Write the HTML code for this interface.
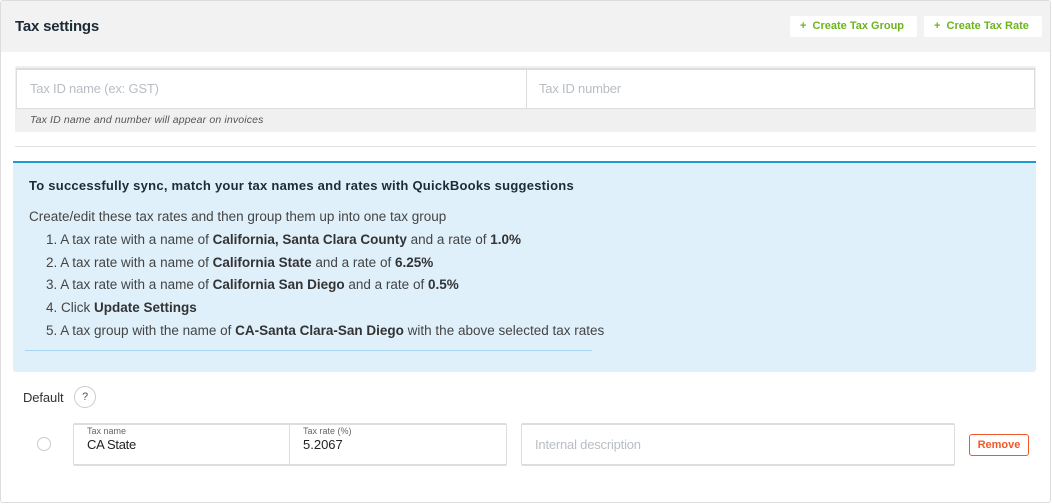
<!DOCTYPE html>
<html><head><style>
*{box-sizing:border-box;margin:0;padding:0}
body{width:1052px;height:504px;background:#fff;font-family:"Liberation Sans",sans-serif;position:relative;overflow:hidden;color:#333}
.card{position:absolute;left:0;top:0;width:1051px;height:503px;border:1px solid #ddd;border-radius:3px}
.hdr{position:absolute;left:1px;top:1px;width:1049px;height:51px;background:#f2f2f2}
.title{position:absolute;left:15px;top:18px;font-size:15px;font-weight:bold;color:#1d2b36;letter-spacing:-0.2px}
.btn{position:absolute;top:16px;height:21px;background:#fff;border-radius:2px;color:#6cb41e;font-size:11px;font-weight:bold;line-height:21px;padding-left:10px;letter-spacing:0}
.abs{position:absolute}
.ph{color:#b8bec4;font-size:13px;letter-spacing:-0.2px}
.blue{position:absolute;left:13px;top:161px;width:1023px;height:211px;background:#dff0fa;border-top:2px solid #1a9ad6;border-radius:0 0 3px 3px}
.blue div{position:absolute;font-size:13.5px;color:#444;white-space:nowrap;letter-spacing:0}
.blue b{color:#333}
</style></head><body>
<div class="card"></div>
<div class="hdr"></div>
<div class="title">Tax settings</div>
<div class="btn" style="left:790px;width:127px">+&nbsp;&nbsp;Create Tax Group</div>
<div class="btn" style="left:924px;width:118px">+&nbsp;&nbsp;Create Tax Rate</div>

<div class="abs" style="left:15px;top:66px;width:1021px;height:66px;background:#f0f0f0;border-radius:2px"></div>
<div class="abs" style="left:16px;top:68px;width:1019px;height:41px;background:#fff;border:1px solid #ddd;border-top:2px solid #ddd"></div>
<div class="abs" style="left:526px;top:69px;width:1px;height:39px;background:#ddd"></div>
<div class="abs ph" style="left:30px;top:81px">Tax ID name (ex: GST)</div>
<div class="abs ph" style="left:539px;top:81px">Tax ID number</div>
<div class="abs" style="left:30px;top:114px;font-size:10.5px;font-style:italic;color:#555;letter-spacing:0.15px">Tax ID name and number will appear on invoices</div>
<div class="abs" style="left:15px;top:146px;width:1021px;height:1px;background:#e2e2e2"></div>

<div class="blue">
<div style="left:16px;top:15px;font-weight:bold;color:#1d2b36;font-size:13px;letter-spacing:0.25px">To successfully sync, match your tax names and rates with QuickBooks suggestions</div>
<div style="left:16px;top:46px">Create/edit these tax rates and then group them up into one tax group</div>
<div style="left:33px;top:69px">1. A tax rate with a name of <b>California, Santa Clara County</b> and a rate of <b>1.0%</b></div>
<div style="left:33px;top:92px">2. A tax rate with a name of <b>California State</b> and a rate of <b>6.25%</b></div>
<div style="left:33px;top:114px">3. A tax rate with a name of <b>California San Diego</b> and a rate of <b>0.5%</b></div>
<div style="left:33px;top:137px">4. Click <b>Update Settings</b></div>
<div style="left:33px;top:160px">5. A tax group with the name of <b>CA-Santa Clara-San Diego</b> with the above selected tax rates</div>
<div style="left:12px;top:187px;width:567px;height:1px;background:#a8d8f0"></div>
</div>

<div class="abs" style="left:23px;top:390px;font-size:13px;color:#333;letter-spacing:-0.1px">Default</div>
<div class="abs" style="left:74px;top:386px;width:22px;height:22px;border:1px solid #ccc;border-radius:50%;font-size:11px;text-align:center;line-height:20px;color:#555">?</div>
<div class="abs" style="left:37px;top:437px;width:14px;height:14px;border:1px solid #ccc;border-radius:50%"></div>
<div class="abs" style="left:73px;top:423px;width:434px;height:43px;border:1px solid #ddd;border-width:2px 1px 2px 1px;border-radius:2px"></div>
<div class="abs" style="left:289px;top:424px;width:1px;height:41px;background:#ddd"></div>
<div class="abs" style="left:87px;top:426px;font-size:9px;color:#666">Tax name</div>
<div class="abs" style="left:87px;top:437px;font-size:13px;color:#222;letter-spacing:-0.3px">CA State</div>
<div class="abs" style="left:303px;top:426px;font-size:9px;color:#666">Tax rate (%)</div>
<div class="abs" style="left:303px;top:437px;font-size:13px;color:#222">5.2067</div>
<div class="abs" style="left:521px;top:423px;width:434px;height:43px;border:1px solid #ddd;border-width:2px 1px 2px 1px;border-radius:2px"></div>
<div class="abs ph" style="left:535px;top:437px">Internal description</div>
<div class="abs" style="left:969px;top:434px;width:60px;height:22px;border:1px solid #f05a28;border-radius:3px;color:#f05a28;font-size:11px;font-weight:bold;text-align:center;line-height:20px">Remove</div>
</body></html>
